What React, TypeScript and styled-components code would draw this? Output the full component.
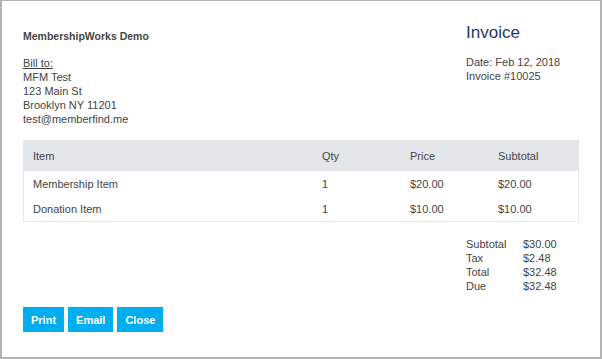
import { Fragment } from 'react';
import styled, { createGlobalStyle } from 'styled-components';

const GlobalStyle = createGlobalStyle`
  html, body { margin: 0; padding: 0; background: #fff; }
  body { font-family: "Liberation Sans", Arial, sans-serif; font-size: 11px; color: #444; }
`;

const Frame = styled.div`
  box-sizing: border-box;
  width: 602px;
  height: 359px;
  border: 2px solid #b3b3b3;
  border-top-width: 1px;
  padding: 22px 21px 0 21px;
  display: flex;
  flex-direction: column;
`;

const Head = styled.div`
  display: flex;
  justify-content: space-between;
`;

const Col = styled.div<{ $w?: number }>`
  display: flex;
  flex-direction: column;
  width: ${p => (p.$w ? `${p.$w}px` : 'auto')};
`;

const Company = styled.div`
  font-weight: 700;
  font-size: 10.5px;
  line-height: 14px;
  margin-top: 6px;
  color: #454545;
`;

const Lines = styled.div`
  margin-top: 13px;
  line-height: 14px;
`;

const Underlined = styled.div`
  text-decoration: underline;
`;

const Title = styled.div`
  font-size: 17px;
  line-height: 20px;
  color: #1b3a6b;
`;

const Meta = styled.div`
  margin-top: 12px;
  line-height: 14px;
`;

const Table = styled.table`
  margin-top: 14px;
  width: 556px;
  border-collapse: collapse;
  border: 1px solid #e4e7ea;
`;

const Th = styled.th<{ $w?: number }>`
  background: #e4e7ea;
  font-weight: 400;
  text-align: left;
  height: 30px;
  padding: 0 0 0 9px;
  vertical-align: middle;
  width: ${p => (p.$w ? `${p.$w}px` : 'auto')};
`;

const Td = styled.td`
  height: 25px;
  padding: 0 0 0 9px;
`;

const Totals = styled.div`
  margin-top: 15px;
  align-self: flex-end;
  width: 113px;
  display: grid;
  grid-template-columns: 57px 1fr;
  line-height: 14px;
`;

const Buttons = styled.div`
  margin-top: 14px;
  display: flex;
  gap: 4px;
`;

const Button = styled.button`
  height: 25px;
  padding: 0 8px;
  border: none;
  background: #00aeef;
  color: #fff;
  font-family: inherit;
  font-weight: 700;
  font-size: 11px;
  cursor: pointer;
`;

const items = [
  { name: 'Membership Item', qty: 1, price: '$20.00', subtotal: '$20.00' },
  { name: 'Donation Item', qty: 1, price: '$10.00', subtotal: '$10.00' },
];

const totals = [
  ['Subtotal', '$30.00'],
  ['Tax', '$2.48'],
  ['Total', '$32.48'],
  ['Due', '$32.48'],
];

export default function App() {
  return (
    <>
      <GlobalStyle />
      <Frame>
        <Head>
          <Col>
            <Company>MembershipWorks Demo</Company>
            <Lines>
              <Underlined>Bill to:</Underlined>
              <div>MFM Test</div>
              <div>123 Main St</div>
              <div>Brooklyn NY 11201</div>
              <div>test@memberfind.me</div>
            </Lines>
          </Col>
          <Col $w={113}>
            <Title>Invoice</Title>
            <Meta>
              <div>Date: Feb 12, 2018</div>
              <div>Invoice #10025</div>
            </Meta>
          </Col>
        </Head>

        <Table>
          <thead>
            <tr>
              <Th $w={280}>Item</Th>
              <Th $w={79}>Qty</Th>
              <Th $w={79}>Price</Th>
              <Th>Subtotal</Th>
            </tr>
          </thead>
          <tbody>
            {items.map(it => (
              <tr key={it.name}>
                <Td>{it.name}</Td>
                <Td>{it.qty}</Td>
                <Td>{it.price}</Td>
                <Td>{it.subtotal}</Td>
              </tr>
            ))}
          </tbody>
        </Table>

        <Totals>
          {totals.map(([label, value]) => (
            <Fragment key={label}>
              <div>{label}</div>
              <div>{value}</div>
            </Fragment>
          ))}
        </Totals>

        <Buttons>
          <Button>Print</Button>
          <Button>Email</Button>
          <Button>Close</Button>
        </Buttons>
      </Frame>
    </>
  );
}
